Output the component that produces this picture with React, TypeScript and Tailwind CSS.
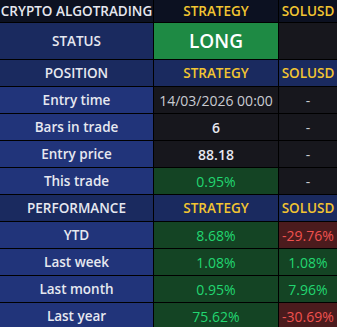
import React from 'react';

type Tone = 'dark' | 'navy' | 'blue' | 'head' | 'green' | 'red' | 'long';

const BG: Record<Tone, string> = {
  head: 'bg-[#0c1121]',
  navy: 'bg-[#1a2a5f]',
  blue: 'bg-[#21347a]',
  dark: 'bg-[#17171d]',
  green: 'bg-[#144424]',
  red: 'bg-[#4b1b1d]',
  long: 'bg-[#1e8a44]',
};

const Cell = ({ tone, className = '', children }: { tone: Tone; className?: string; children?: React.ReactNode }) => (
  <div className={`flex items-center justify-center whitespace-nowrap ${BG[tone]} ${className}`}>{children}</div>
);

const white = 'text-[#e6e8f0]';
const gold = 'text-[#f2c531]';
const up = 'text-[#22d671] font-medium text-[14px]';
const down = 'text-[#f0524f] font-medium text-[14px]';
const plain = 'text-[#c9cbd2] font-medium text-[14px]';

const TRADE = [
  { label: 'Entry time', value: '14/03/2026 00:00', tone: 'dark' as Tone, color: plain },
  { label: 'Bars in trade', value: '6', tone: 'dark' as Tone, color: `${white} text-[14px]` },
  { label: 'Entry price', value: '88.18', tone: 'dark' as Tone, color: `${white} text-[14px]` },
  { label: 'This trade', value: '0.95%', tone: 'green' as Tone, color: up },
];

const PERF = [
  { label: 'YTD', strat: '8.68%', sym: '-29.76%' },
  { label: 'Last week', strat: '1.08%', sym: '1.08%' },
  { label: 'Last month', strat: '0.95%', sym: '7.96%' },
  { label: 'Last year', strat: '75.62%', sym: '-30.69%' },
];

export default function App() {
  return (
    <div
      className="grid w-[337px] h-[327px] overflow-hidden grid-cols-[153px_124px_58px] grid-rows-[22px_36px_repeat(10,26px)] gap-px bg-black text-[13.5px] font-semibold"
      style={{ fontFamily: '"Open Sans", "Noto Sans", sans-serif' }}
    >
      <Cell tone="head" className={white}>CRYPTO ALGOTRADING</Cell>
      <Cell tone="head" className={gold}>STRATEGY</Cell>
      <Cell tone="head" className={gold}>SOLUSD</Cell>

      <Cell tone="navy" className={white}>STATUS</Cell>
      <Cell tone="long" className="text-white text-[19px] font-semibold">LONG</Cell>
      <Cell tone="dark" />

      <Cell tone="navy" className={white}>POSITION</Cell>
      <Cell tone="navy" className={gold}>STRATEGY</Cell>
      <Cell tone="navy" className={gold}>SOLUSD</Cell>

      {TRADE.map((r) => (
        <React.Fragment key={r.label}>
          <Cell tone="blue" className={white}>{r.label}</Cell>
          <Cell tone={r.tone} className={r.color}>{r.value}</Cell>
          <Cell tone="dark" className={plain}>-</Cell>
        </React.Fragment>
      ))}

      <Cell tone="navy" className={white}>PERFORMANCE</Cell>
      <Cell tone="navy" className={gold}>STRATEGY</Cell>
      <Cell tone="navy" className={gold}>SOLUSD</Cell>

      {PERF.map((r) => (
        <React.Fragment key={r.label}>
          <Cell tone="blue" className={white}>{r.label}</Cell>
          <Cell tone="green" className={up}>{r.strat}</Cell>
          <Cell tone={r.sym.startsWith('-') ? 'red' : 'green'} className={r.sym.startsWith('-') ? down : up}>
            {r.sym}
          </Cell>
        </React.Fragment>
      ))}
    </div>
  );
}
